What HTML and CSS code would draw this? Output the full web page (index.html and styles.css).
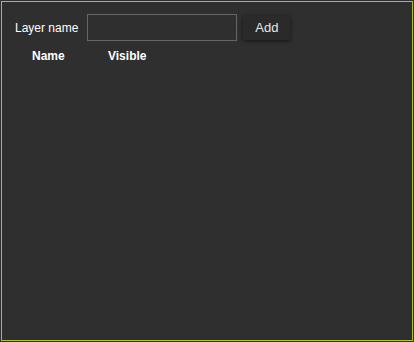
FILE: index.html
```html
<!DOCTYPE html>
<html lang="en">
<head>
    <meta charset="UTF-8">
    <meta name="viewport" content="width=device-width, initial-scale=1.0">
    <title>Layers</title>
    <link rel="stylesheet" href="styles.css">
</head>
<body>
    <div class="panel">
        <div class="layer-form">
            <label for="layerName">Layer name</label>
            <input type="text" id="layerName">
            <button class="add-btn" id="addButton">Add</button>
        </div>

        <table class="layer-table">
            <thead>
                <tr>
                    <th class="col-name">Name</th>
                    <th class="col-visible">Visible</th>
                </tr>
            </thead>
            <tbody id="layerList">
                <!-- Layers go here -->
            </tbody>
        </table>
    </div>
</body>
</html>
```

FILE: styles.css
```css
html, body {
    margin: 0;
    padding: 0;
    background: #2f2f2f;
}

body {
    padding: 1px;
    font-family: "Liberation Sans", Arial, sans-serif;
    font-size: 12px;
    color: #fff;
}

.panel {
    box-sizing: border-box;
    width: 412px;
    height: 340px;
    border: 1px solid #a8c81e;
    background: #2f2f2f;
    padding: 12px 0 0 13px;
}

.layer-form {
    display: flex;
    align-items: center;
    gap: 6px;
}

.layer-form label {
    margin-right: 3px;
}

.layer-form input {
    box-sizing: border-box;
    width: 150px;
    height: 27px;
    margin: 0;
    border: 1px solid #666;
    background: #2f2f2f;
    color: #fff;
    outline: none;
}

.add-btn {
    box-sizing: border-box;
    width: 47px;
    height: 24px;
    padding: 0;
    border: none;
    border-radius: 2px;
    background: #2a2a2a;
    color: #e6e6e6;
    font-family: inherit;
    font-size: 13px;
    box-shadow: 0 1px 4px rgba(0, 0, 0, 0.6);
}

.layer-table {
    border-collapse: collapse;
    margin-top: 6px;
}

.layer-table th {
    padding: 2px 0;
    font-size: 12px;
    font-weight: bold;
    text-align: left;
}

.layer-table th.col-name {
    box-sizing: border-box;
    width: 93px;
    padding-left: 17px;
}
```
